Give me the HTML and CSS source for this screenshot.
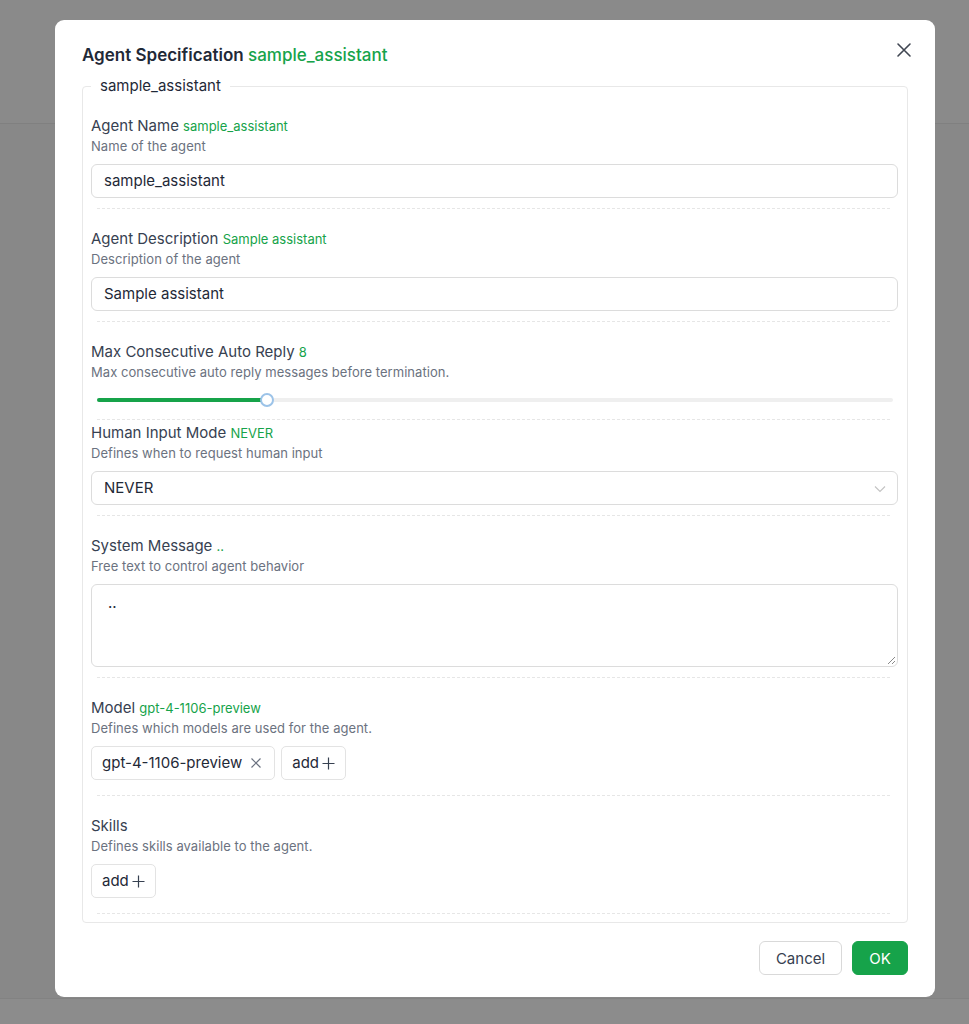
FILE: index.html
```html
<!DOCTYPE html>
<html>
<head>
<meta charset="utf-8">
<link rel="stylesheet" href="styles.css">
</head>
<body>
<div class="page">
  <div class="page-top"></div>
  <div class="page-mid"></div>
  <div class="page-bottom"></div>
</div>
<div class="modal">
  <div class="modal-header">
    <div class="modal-title">Agent Specification <span class="green">sample_assistant</span></div>
    <button class="close" aria-label="close">
      <svg width="16" height="16" viewBox="0 0 16 16"><path d="M2 2 L14 14 M14 2 L2 14" stroke="#404652" stroke-width="1.6" stroke-linecap="round" fill="none"/></svg>
    </button>
  </div>
  <fieldset class="spec">
    <legend>sample_assistant</legend>

    <div class="item">
      <div class="label">Agent Name <span class="val">sample_assistant</span></div>
      <div class="desc">Name of the agent</div>
      <div class="input">sample_assistant</div>
      <div class="sep"></div>
    </div>

    <div class="item">
      <div class="label">Agent Description <span class="val">Sample assistant</span></div>
      <div class="desc">Description of the agent</div>
      <div class="input">Sample assistant</div>
      <div class="sep"></div>
    </div>

    <div class="item">
      <div class="label">Max Consecutive Auto Reply <span class="val">8</span></div>
      <div class="desc">Max consecutive auto reply messages before termination.</div>
      <div class="slider">
        <div class="rail"><div class="track" style="width:21.4%"></div><div class="handle" style="left:21.4%"></div></div>
      </div>
      <div class="sep sep-tight"></div>
    </div>

    <div class="item item-tight">
      <div class="label">Human Input Mode <span class="val">NEVER</span></div>
      <div class="desc">Defines when to request human input</div>
      <div class="input select">NEVER
        <svg class="chev" width="12" height="8" viewBox="0 0 12 8"><path d="M1 1.5 L6 6.5 L11 1.5" stroke="#c4c4c4" stroke-width="1.2" fill="none"/></svg>
      </div>
      <div class="sep"></div>
    </div>

    <div class="item">
      <div class="label">System Message <span class="val">..</span></div>
      <div class="desc">Free text to control agent behavior</div>
      <div class="textarea">..
        <svg class="grip" width="10" height="10" viewBox="0 0 10 10"><path d="M9 2 L2 9 M9 6 L6 9" stroke="#8a8a8a" stroke-width="1" fill="none"/></svg>
      </div>
      <div class="sep"></div>
    </div>

    <div class="item">
      <div class="label">Model <span class="val">gpt-4-1106-preview</span></div>
      <div class="desc">Defines which models are used for the agent.</div>
      <div class="tags">
        <div class="tag">gpt-4-1106-preview
          <svg class="tag-x" width="12" height="12" viewBox="0 0 12 12"><path d="M1.5 1.5 L10.5 10.5 M10.5 1.5 L1.5 10.5" stroke="#6b7280" stroke-width="1.2" fill="none"/></svg>
        </div>
        <div class="tag tag-add">add<svg class="plus" width="13" height="13" viewBox="0 0 13 13"><path d="M6.5 0.5 V12.5 M0.5 6.5 H12.5" stroke="#374151" stroke-width="1.2" fill="none"/></svg></div>
      </div>
      <div class="sep sep-wide"></div>
    </div>

    <div class="item">
      <div class="label">Skills</div>
      <div class="desc">Defines skills available to the agent.</div>
      <div class="tags">
        <div class="tag tag-add">add<svg class="plus" width="13" height="13" viewBox="0 0 13 13"><path d="M6.5 0.5 V12.5 M0.5 6.5 H12.5" stroke="#374151" stroke-width="1.2" fill="none"/></svg></div>
      </div>
      <div class="sep sep-wide"></div>
    </div>
  </fieldset>
  <div class="footer">
    <button class="btn btn-cancel">Cancel</button>
    <button class="btn btn-ok">OK</button>
  </div>
</div>
</body>
</html>
```

FILE: styles.css
```css
* { box-sizing: border-box; }
html, body { margin: 0; padding: 0; }
body {
  width: 969px;
  height: 1024px;
  overflow: hidden;
  background: #888888;
  font-family: Inter, "Noto Sans", "Liberation Sans", sans-serif;
  color: #374151;
}
.page { display: flex; flex-direction: column; height: 1024px; }
.page-top { height: 124px; border-bottom: 1px solid #808080; background: #8a8a8a; }
.page-mid { flex: 1; background: #888888; }
.page-bottom { height: 26px; border-top: 1px solid #828282; background: #8c8c8c; }

.modal {
  position: absolute;
  left: 55px;
  top: 20px;
  width: 880px;
  height: 977px;
  background: #ffffff;
  border-radius: 9px;
  padding: 0 27px;
  display: flex;
  flex-direction: column;
}
.modal-header {
  display: flex;
  justify-content: space-between;
  align-items: flex-start;
  padding-top: 23px;
  height: 56px;
}
.modal-title {
  font-size: 17px;
  line-height: 24px;
  font-weight: 600;
  color: #1f2937;
}
.green { color: #16a34a; font-weight: 500; }
.close {
  border: 0;
  background: transparent;
  padding: 0;
  margin: -1px -4px 0 0;
  width: 16px;
  height: 16px;
  display: flex;
}
.spec {
  margin: 0;
  border: 1px solid #e8e8e8;
  border-radius: 4px;
  padding: 0 9px 8px 8px;
  min-width: 0;
}
.spec legend {
  padding: 0 9px;
  font-size: 15px;
  line-height: 20px;
  color: #1f2937;
}
.item { padding-top: 20px; }
.item-tight { padding-top: 3px; }
.label {
  font-size: 15px;
  line-height: 20px;
  color: #374151;
}
.val { font-size: 13px; color: #16a34a; }
.desc {
  font-size: 13px;
  line-height: 20px;
  color: #6b7280;
  letter-spacing: 0.05px;
}
.input {
  margin-top: 8px;
  height: 34px;
  border: 1px solid #dcdcdc;
  border-radius: 6px;
  padding: 0 12px;
  font-size: 15px;
  line-height: 32px;
  color: #1f2937;
  position: relative;
}
.select .chev { position: absolute; right: 11px; top: 13px; }
.textarea {
  margin-top: 8px;
  height: 83px;
  border: 1px solid #dcdcdc;
  border-radius: 6px;
  padding: 6px 16px;
  font-size: 15px;
  line-height: 24px;
  color: #1f2937;
  position: relative;
}
.grip { position: absolute; right: 1px; bottom: 1px; }
.sep {
  margin: 10px 8px 0 6px;
  border-top: 1px dashed #e6e6e6;
}
.sep-tight { margin-top: 1px; }
.sep-wide { margin-top: 15px; }
.slider {
  height: 36px;
  padding: 0 5px 0 6px;
  display: flex;
  align-items: center;
}
.rail {
  position: relative;
  width: 100%;
  height: 4px;
  border-radius: 2px;
  background: #efefef;
}
.track {
  height: 4px;
  border-radius: 2px;
  background: #16a34a;
}
.handle {
  position: absolute;
  top: 50%;
  width: 14px;
  height: 14px;
  margin: -7px 0 0 -7px;
  border-radius: 50%;
  background: #fff;
  border: 2px solid #9cc3e8;
}
.tags { margin-top: 8px; display: flex; gap: 6px; }
.tag {
  height: 34px;
  border: 1px solid #e3e3e3;
  border-radius: 5px;
  padding: 0 12px 0 10px;
  font-size: 15px;
  line-height: 32px;
  color: #1f2937;
  display: flex;
  align-items: center;
}
.tag-x { margin-left: 8px; }
.tag-add { padding: 0 10px 0 10px; }
.plus { margin-left: 3px; }
.footer {
  margin-top: 18px;
  display: flex;
  justify-content: flex-end;
  gap: 10px;
}
.btn {
  height: 34px;
  border-radius: 6px;
  font-family: Inter, "Noto Sans", "Liberation Sans", sans-serif;
  font-size: 15px;
  padding: 0;
  cursor: pointer;
}
.btn-cancel {
  width: 83px;
  background: #fff;
  border: 1px solid #d9d9d9;
  color: #374151;
}
.btn-ok {
  width: 56px;
  background: #16a34a;
  border: 1px solid #16a34a;
  color: #fff;
}
```
